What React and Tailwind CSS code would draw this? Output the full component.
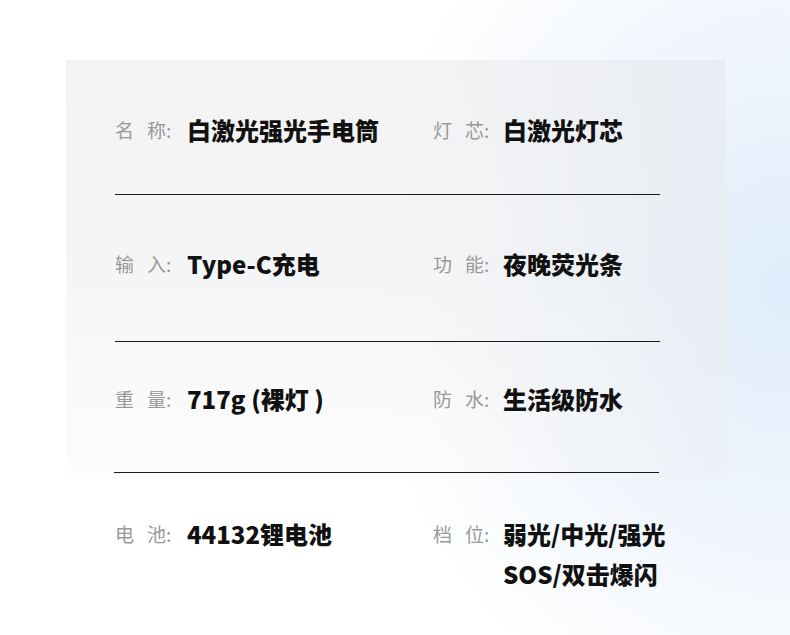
import React from 'react';

const font = { fontFamily: '"Noto Sans CJK SC", "Noto Sans", sans-serif' };

function Spec({ a, b, value, wide }) {
  return (
    <div className={`flex items-start ${wide ? 'w-[318px]' : ''}`}>
      <span
        className={`flex shrink-0 text-[19px] leading-[40px] text-[#999999] ${wide ? 'w-[72px]' : 'w-[70px]'}`}
      >
        <span>{a}</span>
        <span className="ml-[13px]">{b}</span>
        <span>:</span>
      </span>
      <span className="text-[24px] font-black leading-[40px] text-[#111111]">
        {Array.isArray(value)
          ? value.map((v) => (
              <span key={v} className="block">
                {v}
              </span>
            ))
          : value}
      </span>
    </div>
  );
}

function Row({ left, right, className = '' }) {
  return (
    <div className={`flex ${className}`}>
      <Spec {...left} wide />
      <Spec {...right} />
    </div>
  );
}

function Rule({ className = '' }) {
  return <div className={`h-px w-[545px] bg-[#1a1a1a] ${className}`} />;
}

export default function App() {
  return (
    <div
      style={font}
      className="h-[635px] w-[790px] overflow-hidden pt-[60px] bg-[radial-gradient(ellipse_55%_75%_at_100%_45%,#dfecfb_0%,#eef4fc_45%,#ffffff_100%)]"
    >
      <div className="ml-[66px] h-[418px] w-[660px] pl-[49px] pt-[50px] bg-[linear-gradient(to_right,rgba(255,255,255,0)_55%,rgba(226,233,243,0.55)_100%),linear-gradient(to_bottom,rgba(242,242,243,0.95)_0%,rgba(243,244,245,0.9)_50%,rgba(252,252,252,0.8)_100%)]">
        <Row
          left={{ a: '名', b: '称', value: '白激光强光手电筒' }}
          right={{ a: '灯', b: '芯', value: '白激光灯芯' }}
        />
        <Rule className="mt-[44px]" />
        <Row
          className="mt-[49px]"
          left={{ a: '输', b: '入', value: 'Type-C充电' }}
          right={{ a: '功', b: '能', value: '夜晚荧光条' }}
        />
        <Rule className="mt-[57px]" />
        <Row
          className="mt-[37px]"
          left={{ a: '重', b: '量', value: '717g (裸灯 )' }}
          right={{ a: '防', b: '水', value: '生活级防水' }}
        />
        <Rule className="mt-[53px] -ml-px" />
      </div>
      <div className="pl-[115px] pt-[36px]">
        <Row
          left={{ a: '电', b: '池', value: '44132锂电池' }}
          right={{ a: '档', b: '位', value: ['弱光/中光/强光', 'SOS/双击爆闪'] }}
        />
      </div>
    </div>
  );
}
